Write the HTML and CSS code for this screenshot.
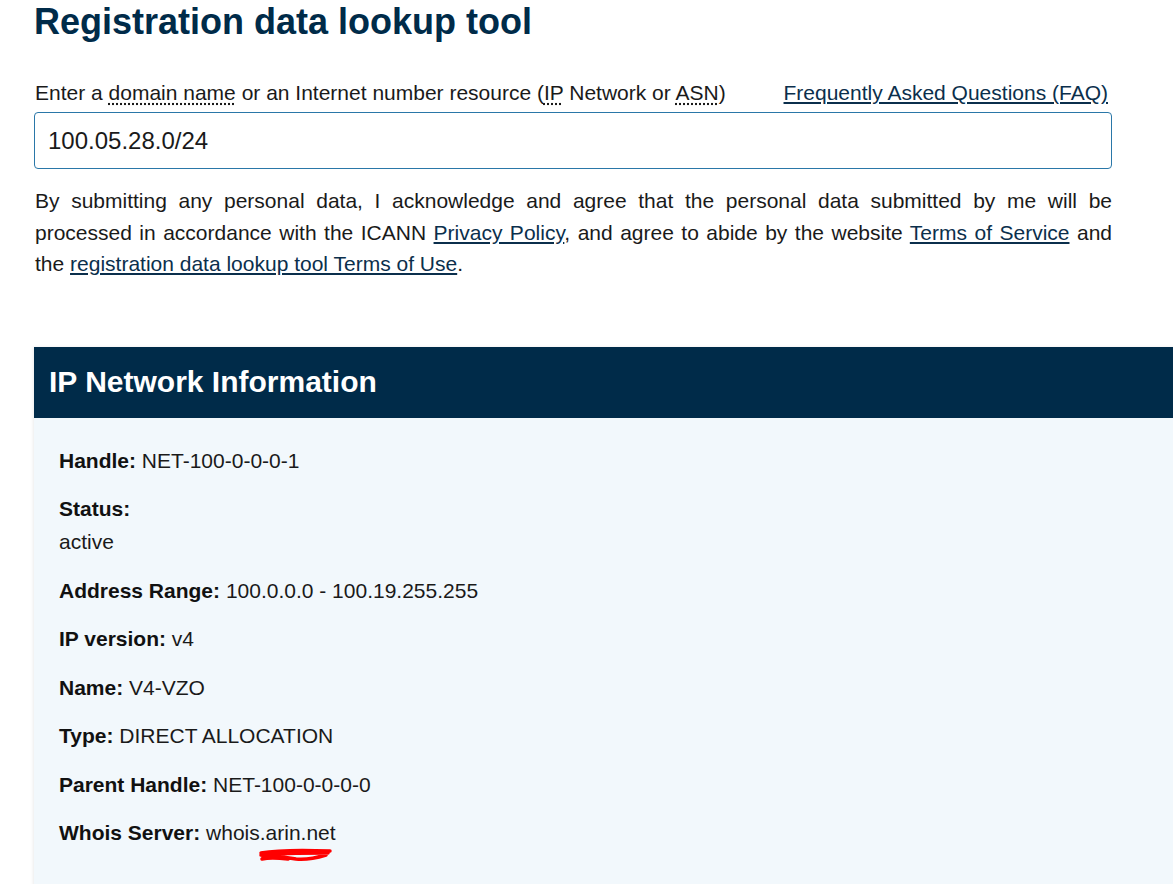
FILE: index.html
```html
<!DOCTYPE html>
<html lang="en">
<head>
<meta charset="utf-8">
<title>Registration data lookup tool</title>
<link rel="stylesheet" href="styles.css">
</head>
<body>
<div class="page">
  <h1 class="title">Registration data lookup tool</h1>
  <div class="form-head">
    <span class="label">Enter a <abbr class="abbr">domain name</abbr> or an Internet number resource (<abbr class="abbr">IP</abbr> Network or <abbr class="abbr">ASN</abbr>)</span>
    <a class="link" href="#">Frequently Asked Questions (FAQ)</a>
  </div>
  <div class="input">100.05.28.0/24</div>
  <p class="notice">By submitting any personal data, I acknowledge and agree that the personal data submitted by me will be processed in accordance with the ICANN <a class="link" href="#">Privacy Policy</a>, and agree to abide by the website <a class="link" href="#">Terms of Service</a> and the <a class="link" href="#">registration data lookup tool Terms of Use</a>.</p>

  <section class="panel">
    <div class="panel-head"><h2 class="panel-title">IP Network Information</h2></div>
    <div class="panel-body">
      <div class="field"><b>Handle:</b> NET-100-0-0-0-1</div>
      <div class="field"><b>Status:</b><br>active</div>
      <div class="field"><b>Address Range:</b> 100.0.0.0 - 100.19.255.255</div>
      <div class="field"><b>IP version:</b> v4</div>
      <div class="field"><b>Name:</b> V4-VZO</div>
      <div class="field"><b>Type:</b> DIRECT ALLOCATION</div>
      <div class="field"><b>Parent Handle:</b> NET-100-0-0-0-0</div>
      <div class="field"><b>Whois Server:</b> <span class="marked">whois.arin.net<svg class="scribble" width="76" height="16" viewBox="0 0 76 16"><path d="M3 6 C 20 3, 45 3, 72 4 M3 8 C 22 6, 48 6, 70 6 M5 10 C 18 9, 28 10, 38 12 C 48 13, 58 11, 68 8 M4 12 C 12 10, 22 11, 30 12" fill="none" stroke="#ff0000" stroke-width="3.5" stroke-linecap="round"/></svg></span></div>
    </div>
  </section>
</div>
</body>
</html>
```

FILE: styles.css
```css
html, body {
  margin: 0;
  padding: 0;
  background: #ffffff;
  overflow: hidden;
}

body {
  font-family: "Liberation Sans", Arial, sans-serif;
  color: #1a1a1a;
  font-size: 21px;
}

.page {
  padding-left: 34px;
  width: 1078px;
}

.title {
  margin: 0;
  font-size: 36px;
  line-height: 43px;
  font-weight: bold;
  color: #002b49;
}

.form-head {
  margin-top: 35px;
  display: flex;
  justify-content: space-between;
  align-items: baseline;
  line-height: 30px;
  padding-left: 1px;
  padding-right: 4px;
}

.abbr {
  text-decoration: underline dotted;
  text-underline-offset: 3px;
}

.link {
  color: #0b2f4c;
  text-decoration: underline;
}

.input {
  margin-top: 4px;
  box-sizing: border-box;
  height: 57px;
  border: 1px solid #2a77a8;
  border-radius: 4px;
  padding: 0 13px;
  display: flex;
  align-items: center;
  color: #1a1a1a;
  font-size: 24px;
}

.notice {
  margin: 16px 0 0 0;
  line-height: 31.5px;
  text-align: justify;
  padding-left: 1px;
}

.panel {
  margin-top: 67px;
  width: 1200px;
  box-shadow: -1px 0 3px rgba(0, 0, 0, 0.08);
}

.panel-head {
  background: #002b49;
  height: 71px;
  display: flex;
  align-items: center;
  padding-left: 15px;
}

.panel-title {
  margin: 0;
  color: #ffffff;
  font-size: 30px;
  font-weight: bold;
}

.panel-body {
  background: #f2f8fc;
  padding: 26px 25px 30px 25px;
}

.field {
  line-height: 33px;
  margin-bottom: 15.5px;
}

.field b {
  font-weight: bold;
  color: #111111;
}

.marked {
  position: relative;
}

.scribble {
  position: absolute;
  left: 52px;
  top: 26px;
}
```
